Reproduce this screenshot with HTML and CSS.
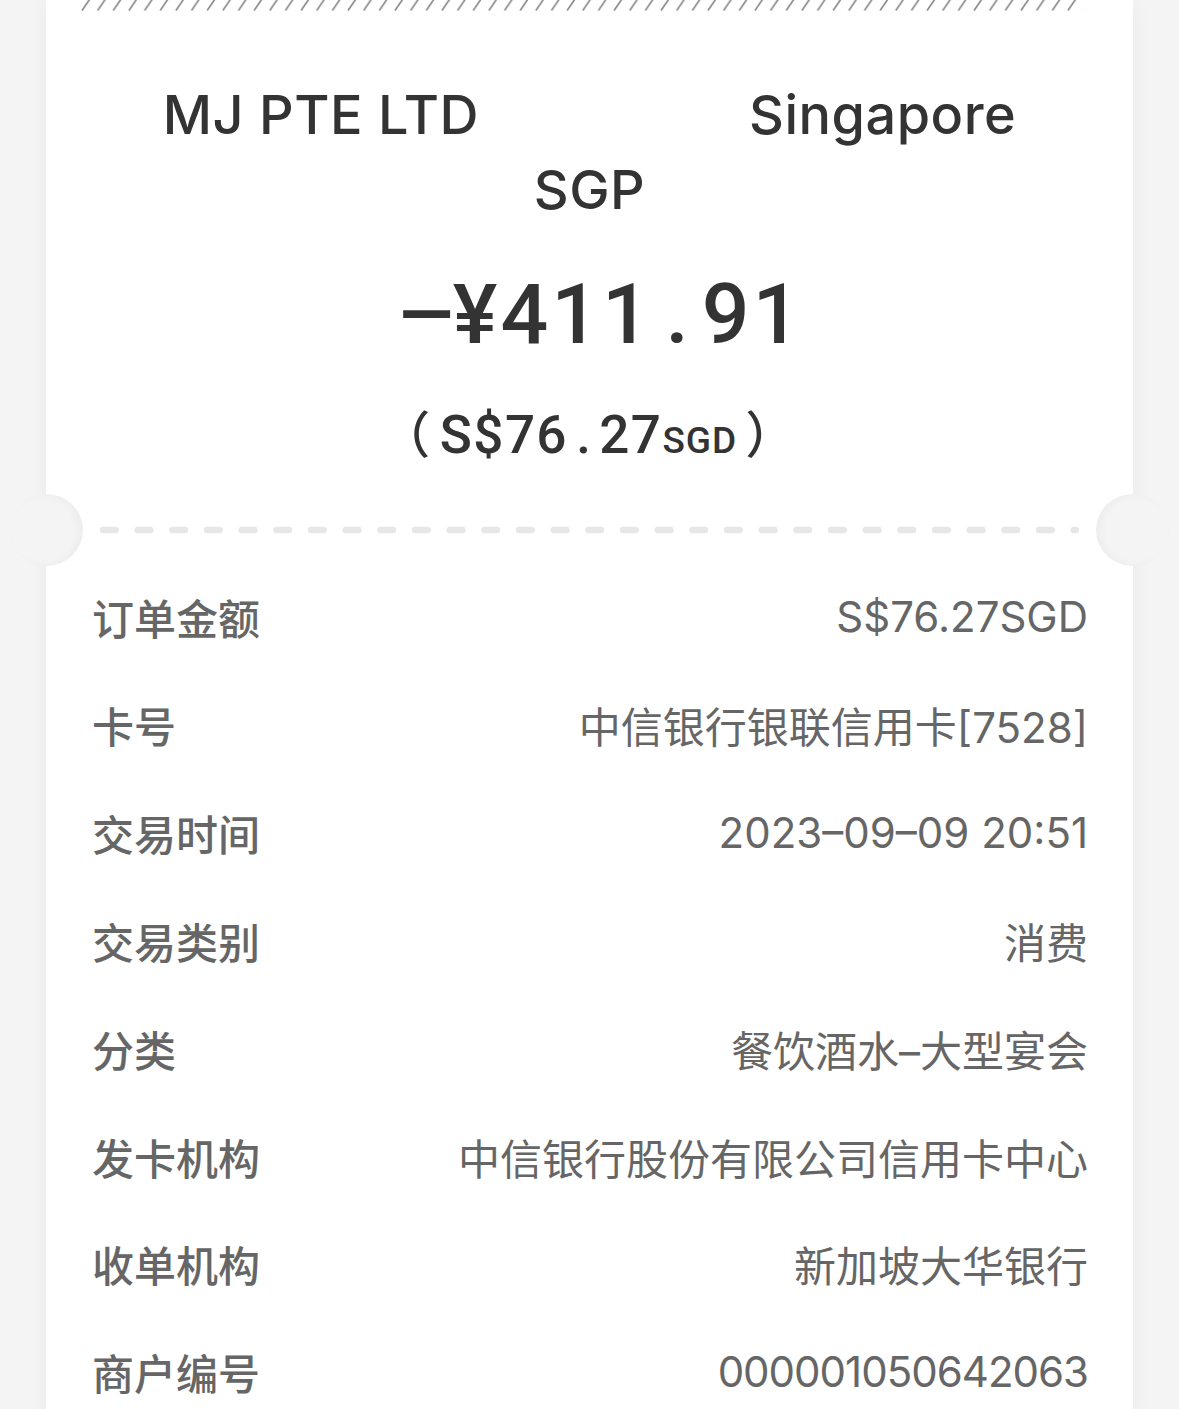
FILE: index.html
```html
<!DOCTYPE html>
<html lang="zh-CN">
<head>
<meta charset="utf-8">
<title>交易详情</title>
<link rel="stylesheet" href="styles.css">
</head>
<body>
<div class="card">
  <div class="hatch">
    <svg width="1002" height="11" viewBox="0 0 1002 11">
      <defs>
        <pattern id="hp" width="15.65" height="11" patternUnits="userSpaceOnUse">
          <line x1="1" y1="10.5" x2="8.5" y2="-0.5" stroke="#8c8c8c" stroke-width="1.7"/>
        </pattern>
      </defs>
      <rect width="1002" height="11" fill="url(#hp)"/>
    </svg>
  </div>
  <div class="merchant">MJ PTE LTD<span class="gap"></span>Singapore SGP</div>
  <div class="amount"><span class="minus">–</span>¥411<span class="dot">.</span>91</div>
  <div class="foreign"><span class="paren paren-l">（</span>S$76<span class="dot2">.</span>27<span class="cur">SGD</span><span class="paren paren-r">）</span></div>
  <div class="divider">
    <span class="notch notch-left"></span>
    <svg class="dashes" width="982" height="8" viewBox="0 0 982 8">
      <line x1="6" y1="4" x2="979" y2="4" stroke="#e7e7e7" stroke-width="6.5" stroke-linecap="round" stroke-dasharray="12.67 22"/>
    </svg>
    <span class="notch notch-right"></span>
  </div>
  <div class="rows">
    <div class="row"><span class="label">订单金额</span><span class="value">S$76.27SGD</span></div>
    <div class="row"><span class="label">卡号</span><span class="value">中信银行银联信用卡[7528]</span></div>
    <div class="row"><span class="label">交易时间</span><span class="value">2023–09–09 20:51</span></div>
    <div class="row"><span class="label">交易类别</span><span class="value">消费</span></div>
    <div class="row"><span class="label">分类</span><span class="value">餐饮酒水–大型宴会</span></div>
    <div class="row"><span class="label">发卡机构</span><span class="value">中信银行股份有限公司信用卡中心</span></div>
    <div class="row"><span class="label">收单机构</span><span class="value">新加坡大华银行</span></div>
    <div class="row"><span class="label">商户编号</span><span class="value value-num">000001050642063</span></div>
  </div>
</div>
</body>
</html>
```

FILE: styles.css
```css
html, body {
  margin: 0;
  padding: 0;
}
body {
  background: #f4f4f4;
  font-family: Inter, "Noto Sans CJK SC", sans-serif;
  height: 1409px;
  overflow: hidden;
}
.card {
  margin: 0 46px;
  width: 1087px;
  background: #ffffff;
  box-shadow: 0 0 22px rgba(0, 0, 0, 0.045);
  min-height: 1409px;
}
.hatch {
  height: 11px;
  padding-left: 35px;
  display: flex;
}
.hatch svg {
  display: block;
}
.merchant {
  margin: 0 auto;
  width: 920px;
  padding-top: 66px;
  text-align: center;
  font-size: 54px;
  line-height: 75px;
  font-weight: 500;
  letter-spacing: 0.5px;
  color: #333333;
}
.gap {
  display: inline-block;
  width: 270px;
}
.amount {
  margin-top: 38px;
  padding-left: 20px;
  text-align: center;
  font-family: Roboto, sans-serif;
  font-weight: 500;
  font-size: 84px;
  line-height: 100px;
  letter-spacing: 3px;
  color: #333333;
  font-variant-numeric: tabular-nums;
}
.amount .minus {
  display: inline-block;
  width: 57px;
  text-align: left;
  letter-spacing: 0;
  transform: scaleX(1.12);
  transform-origin: left center;
}
.amount .dot {
  display: inline-block;
  width: 49px;
  text-align: center;
  letter-spacing: 0;
}
.foreign {
  margin-top: 31px;
  text-align: center;
  font-family: Roboto, "Noto Sans CJK SC", sans-serif;
  font-weight: 500;
  font-size: 53px;
  line-height: 70px;
  letter-spacing: 1.5px;
  color: #333333;
  font-variant-numeric: tabular-nums;
}
.foreign .dot2 {
  display: inline-block;
  width: 31px;
  text-align: center;
  letter-spacing: 0;
}
.foreign .cur {
  font-size: 37px;
  letter-spacing: 1px;
}
.foreign .paren {
  font-family: "Noto Sans CJK SC", sans-serif;
  font-weight: 500;
  font-size: 50px;
}
.foreign .paren-l {
  margin-right: 8px;
  margin-left: -2px;
}
.foreign .paren-r {
  margin-left: 8px;
}
.divider {
  position: relative;
  height: 72px;
  margin-top: 18px;
  display: flex;
  align-items: center;
  padding-left: 51px;
}
.dashes {
  display: block;
}
.notch {
  position: absolute;
  top: 0;
  width: 74px;
  height: 72px;
  border-radius: 50%;
  background: #f4f4f4;
}
.notch-left {
  left: -37px;
  box-shadow: inset -4px 0 8px rgba(0, 0, 0, 0.035);
}
.notch-right {
  right: -37px;
  box-shadow: inset 4px 0 8px rgba(0, 0, 0, 0.035);
}
.rows {
  margin-top: -3px;
  padding: 0 45px 0 46px;
}
.row {
  display: flex;
  justify-content: space-between;
  align-items: center;
  height: 107.85px;
  font-size: 42px;
  color: #666666;
}
.label {
  font-family: "Noto Sans CJK SC", sans-serif;
  font-weight: 500;
}
.value {
  font-family: Inter, "Noto Sans CJK SC", sans-serif;
  font-weight: 400;
}
.value-num {
  letter-spacing: -1px;
}
```
